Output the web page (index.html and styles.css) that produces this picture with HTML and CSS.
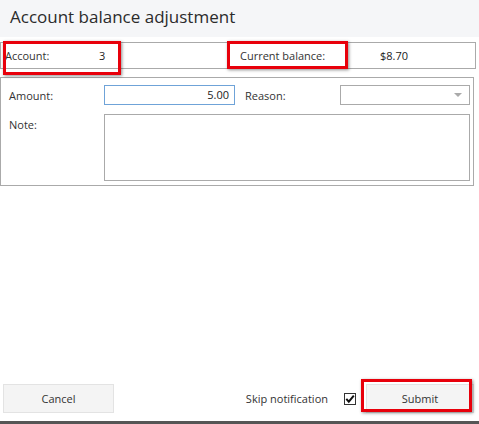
FILE: index.html
```html
<!DOCTYPE html>
<html>
<head>
<meta charset="utf-8">
<link rel="stylesheet" href="styles.css">
</head>
<body>
<div class="page">
  <div class="header"><h1 class="title">Account balance adjustment</h1></div>
  <div class="account-row">
    <div class="acc-cell acc-left">
      <span class="lbl">Account:</span>
      <span class="val val-acc">3</span>
    </div>
    <div class="acc-cell acc-right">
      <span class="lbl">Current balance:</span>
      <span class="val val-bal">$8.70</span>
    </div>
  </div>
  <div class="form-box">
    <div class="form-row">
      <label class="flabel">Amount:</label>
      <div class="input amount">5.00</div>
      <label class="flabel reason-lbl">Reason:</label>
      <div class="input select"><span class="arrow"></span></div>
    </div>
    <div class="form-row note-row">
      <label class="flabel">Note:</label>
      <div class="input note"></div>
    </div>
  </div>
  <div class="spacer"></div>
  <div class="footer">
    <button class="btn cancel">Cancel</button>
    <div class="right">
      <span class="skip">Skip notification</span>
      <span class="check">
        <svg width="12" height="12" viewBox="0 0 12 12">
          <rect x="0.5" y="0.5" width="11" height="11" fill="#fff" stroke="#333" stroke-width="1"/>
          <path d="M2.3 5.8 L4.8 8.6 L9.8 2.6" fill="none" stroke="#111" stroke-width="2"/>
        </svg>
      </span>
      <button class="btn submit">Submit</button>
    </div>
  </div>
  <div class="bottom-line"></div>

  <span class="mark mark-acc"></span>
  <span class="mark mark-bal"></span>
  <span class="mark mark-sub"></span>
</div>
</body>
</html>
```
FILE: styles.css
```css
html, body {
  margin: 0;
  padding: 0;
  background: #fff;
}
body {
  font-family: "Open Sans", "Liberation Sans", sans-serif;
  font-size: 11px;
  color: #333;
}
.page {
  position: relative;
  width: 479px;
  height: 424px;
  display: flex;
  flex-direction: column;
  overflow: hidden;
}
.header {
  height: 37px;
  background: #f5f6f8;
  display: flex;
  align-items: center;
  padding-left: 10px;
}
.title {
  margin: 0;
  font-size: 17px;
  font-weight: 500;
  color: #2b2b2b;
  position: relative;
  top: -2px;
}
.account-row {
  margin-top: 5px;
  width: 474px;
  height: 25px;
  border: 1px solid #aaa;
  display: flex;
  align-items: center;
}
.acc-cell {
  display: flex;
  align-items: center;
  width: 237px;
}
.acc-left .lbl { margin-left: 4px; width: 94px; }
.acc-right .lbl { margin-left: 2px; width: 140px; }
.val { color: #222; }
.form-box {
  margin-top: 8px;
  width: 474px;
  border: 1px solid #aaa;
  padding-top: 7px;
  box-sizing: border-box;
  height: 109px;
}
.form-row {
  display: flex;
  align-items: center;
}
.flabel {
  width: 95px;
  padding-left: 8px;
}
.input {
  box-sizing: border-box;
  height: 20px;
  border: 1px solid #aaa;
  background: #fff;
}
.amount {
  width: 131px;
  border-color: #6fa3d8;
  text-align: right;
  padding-right: 5px;
  line-height: 18px;
  color: #222;
}
.reason-lbl {
  width: 95px;
  padding-left: 10px;
}
.select {
  width: 130px;
  position: relative;
}
.arrow {
  position: absolute;
  right: 7px;
  top: 7px;
  width: 0;
  height: 0;
  border-left: 4px solid transparent;
  border-right: 4px solid transparent;
  border-top: 4px solid #aaa;
}
.note-row {
  margin-top: 9px;
  align-items: flex-start;
}
.note-row .flabel { padding-top: 3px; }
.note {
  width: 366px;
  height: 67px;
}
.spacer { flex: 1; }
.footer {
  display: flex;
  align-items: center;
  justify-content: space-between;
  padding: 0 5px 8px 3px;
}
.btn {
  font-family: "Open Sans", "Liberation Sans", sans-serif;
  font-size: 11px;
  color: #333;
  background: #f4f4f4;
  border: 1px solid #e3e3e3;
  height: 29px;
  padding: 0;
  margin: 0;
}
.cancel { width: 111px; }
.right {
  display: flex;
  align-items: center;
}
.skip { margin-right: 16px; margin-left: 3px; }
.check {
  display: flex;
  width: 12px;
  height: 12px;
  margin-right: 10px;
}
.submit { width: 108px; }
.bottom-line {
  height: 3px;
  background: #555;
}
.mark {
  position: absolute;
  border: 3px solid #e8000b;
  box-shadow: 1px 1px 3px rgba(0,0,0,0.45);
  box-sizing: border-box;
}
.mark-acc { left: 3px; top: 41px; width: 118px; height: 34px; }
.mark-bal { left: 227px; top: 41px; width: 121px; height: 28px; }
.mark-sub { left: 361px; top: 379px; width: 111px; height: 33px; }
```
